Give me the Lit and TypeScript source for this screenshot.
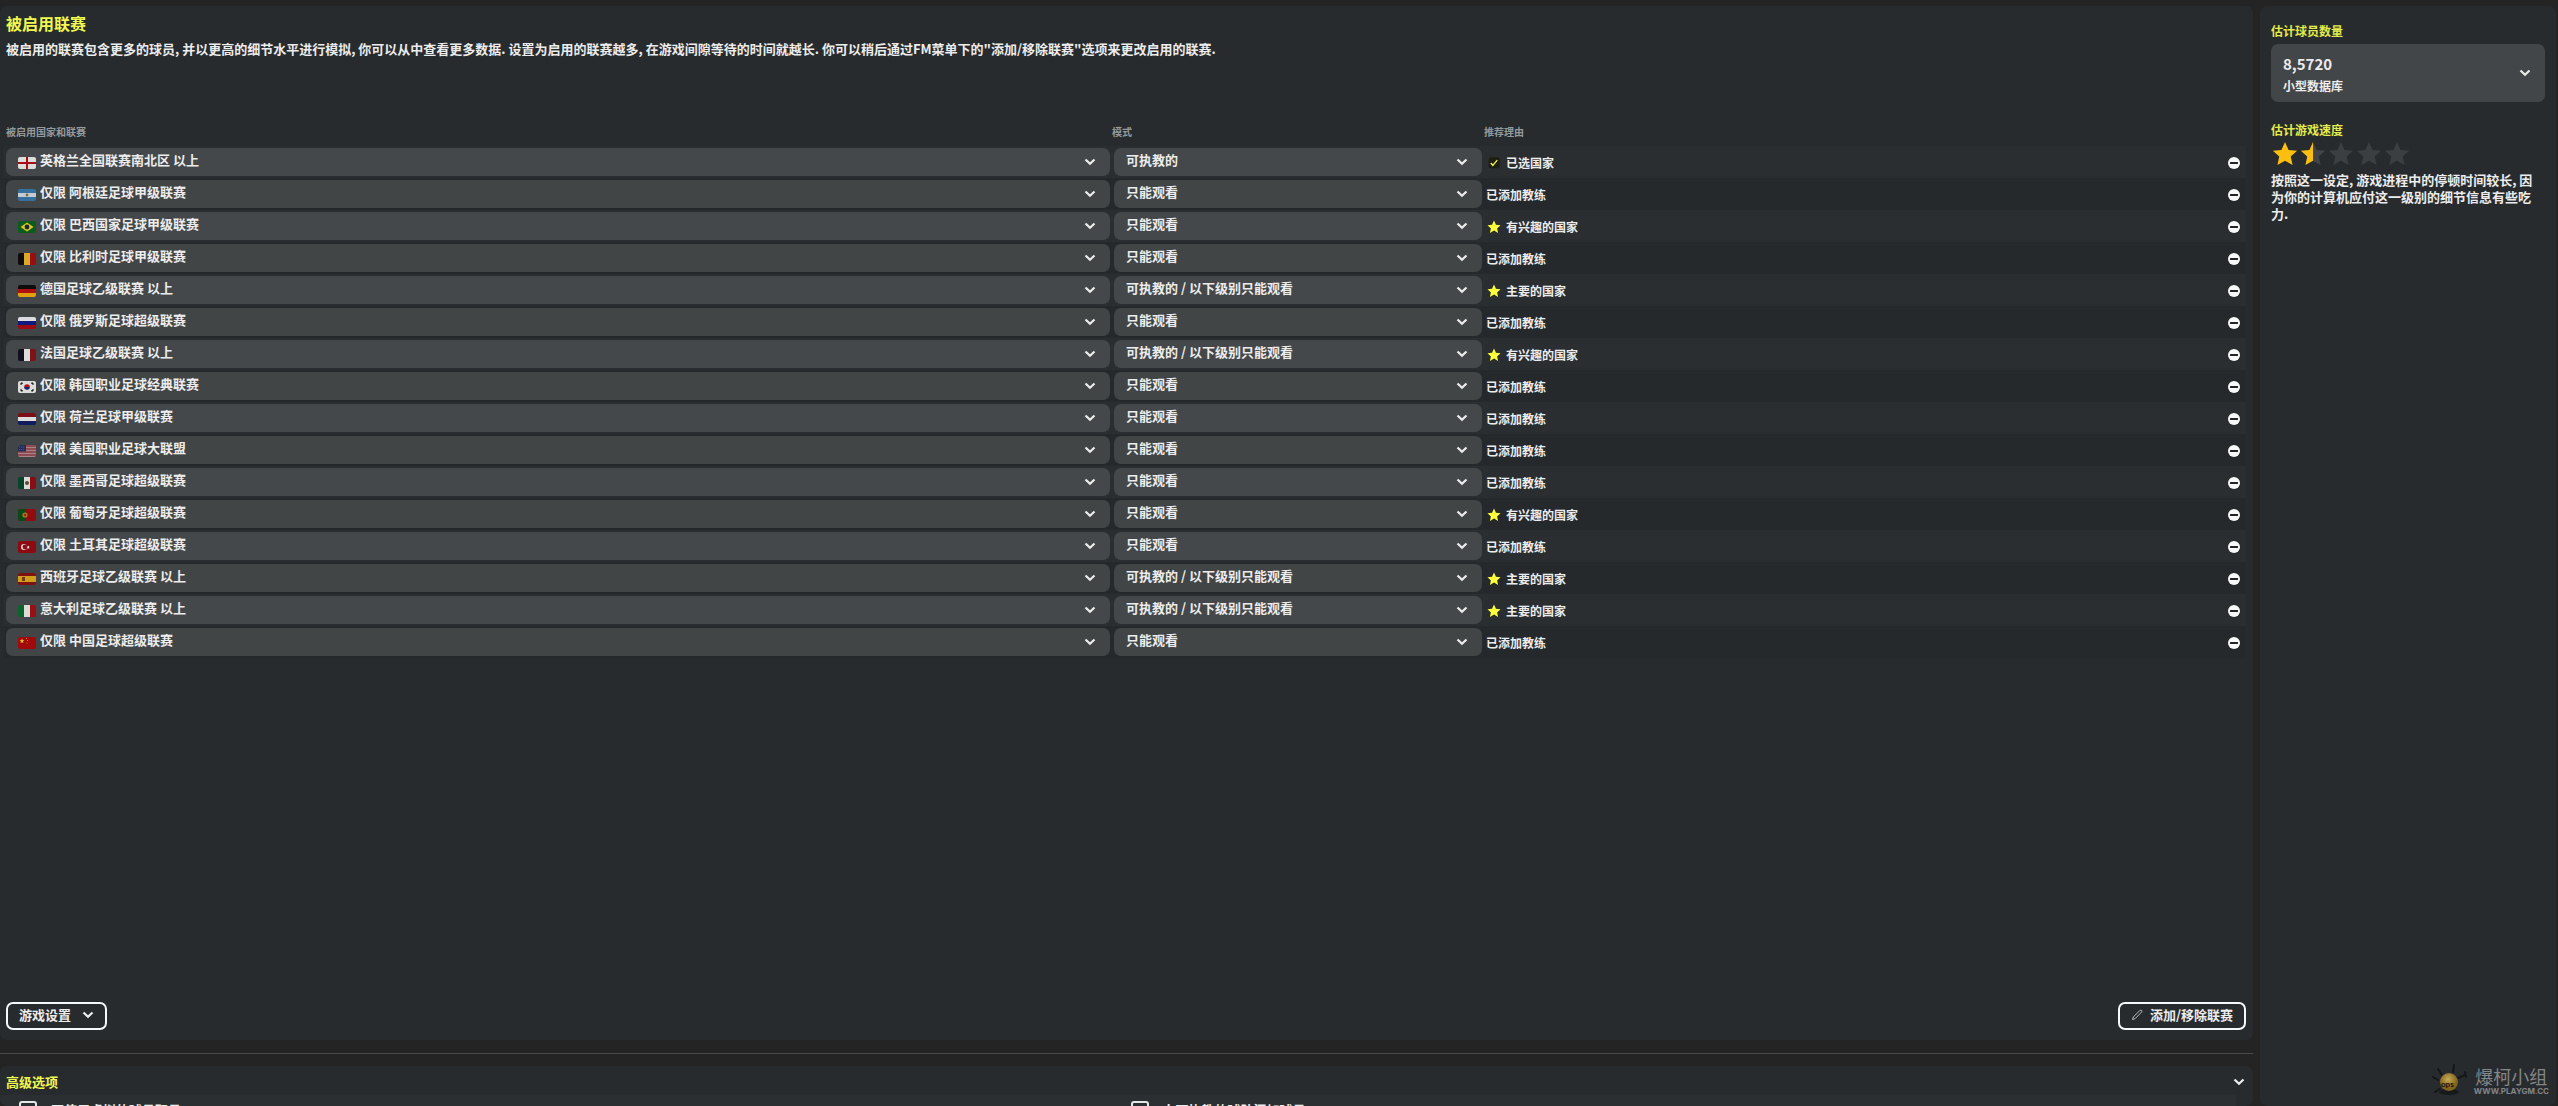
import { LitElement, html, svg, css, nothing } from "lit";
import { customElement, property } from "lit/decorators.js";

type Reason = "selected" | "coach" | "interest" | "major";

interface League {
  flag: string;
  name: string;
  mode: string;
  reason: Reason;
}

const VIEW = "只能观看";
const PLAY = "可执教的";
const MIXED = "可执教的 / 以下级别只能观看";

const REASONS: Record<Reason, string> = {
  selected: "已选国家",
  coach: "已添加教练",
  interest: "有兴趣的国家",
  major: "主要的国家",
};

const LEAGUES: League[] = [
  { flag: "eng", name: "英格兰全国联赛南北区 以上", mode: PLAY, reason: "selected" },
  { flag: "arg", name: "仅限 阿根廷足球甲级联赛", mode: VIEW, reason: "coach" },
  { flag: "bra", name: "仅限 巴西国家足球甲级联赛", mode: VIEW, reason: "interest" },
  { flag: "bel", name: "仅限 比利时足球甲级联赛", mode: VIEW, reason: "coach" },
  { flag: "ger", name: "德国足球乙级联赛 以上", mode: MIXED, reason: "major" },
  { flag: "rus", name: "仅限 俄罗斯足球超级联赛", mode: VIEW, reason: "coach" },
  { flag: "fra", name: "法国足球乙级联赛 以上", mode: MIXED, reason: "interest" },
  { flag: "kor", name: "仅限 韩国职业足球经典联赛", mode: VIEW, reason: "coach" },
  { flag: "ned", name: "仅限 荷兰足球甲级联赛", mode: VIEW, reason: "coach" },
  { flag: "usa", name: "仅限 美国职业足球大联盟", mode: VIEW, reason: "coach" },
  { flag: "mex", name: "仅限 墨西哥足球超级联赛", mode: VIEW, reason: "coach" },
  { flag: "por", name: "仅限 葡萄牙足球超级联赛", mode: VIEW, reason: "interest" },
  { flag: "tur", name: "仅限 土耳其足球超级联赛", mode: VIEW, reason: "coach" },
  { flag: "esp", name: "西班牙足球乙级联赛 以上", mode: MIXED, reason: "major" },
  { flag: "ita", name: "意大利足球乙级联赛 以上", mode: MIXED, reason: "major" },
  { flag: "chn", name: "仅限 中国足球超级联赛", mode: VIEW, reason: "coach" },
];

const rows = (a: string, b: string, c: string) => svg`
  <rect width="18" height="4" fill=${a}/><rect y="4" width="18" height="4" fill=${b}/><rect y="8" width="18" height="4" fill=${c}/>`;
const cols = (a: string, b: string, c: string) => svg`
  <rect width="6" height="12" fill=${a}/><rect x="6" width="6" height="12" fill=${b}/><rect x="12" width="6" height="12" fill=${c}/>`;

const FLAGS: Record<string, unknown> = {
  eng: svg`<rect width="18" height="12" fill="#dcdcda"/><path d="M9 0V12M0 6H18" stroke="#a80c14" stroke-width="2"/>`,
  arg: svg`${rows("#35709e", "#c2ccd2", "#35709e")}<circle cx="9" cy="6" r="1.4" fill="#7a6c4a"/>`,
  bra: svg`<rect width="18" height="12" fill="#0c5c1c"/><path d="M9 1.5L15.500 6L9 10.500L2.500 6Z" fill="#d8c81e"/><circle cx="9" cy="6" r="2.400" fill="#1d2340"/>`,
  bel: cols("#0d0d0d", "#dba92a", "#980f10"),
  ger: rows("#0d0d0d", "#b01010", "#e0a010"),
  rus: rows("#dcdce0", "#10187c", "#9c0c12"),
  fra: cols("#10121e", "#dcdcda", "#7e1216"),
  kor: svg`<rect width="18" height="12" fill="#dcdcda"/><path d="M6.200 6a2.800 2.800 0 0 1 5.600 0z" fill="#b01420"/><path d="M6.200 6a2.800 2.800 0 0 0 5.600 0z" fill="#182460"/><path d="M2.500 3.500L4.500 1.700M13.500 1.700L15.500 3.500M2.500 8.500L4.500 10.300M13.500 10.300L15.500 8.500" stroke="#222" stroke-width="1.600"/>`,
  ned: rows("#7c1016", "#dcdcda", "#101c5c"),
  usa: svg`<rect width="18" height="12" fill="#a8848a"/><path d="M0 1H18M0 4H18M0 7H18M0 10H18" stroke="#883840" stroke-width="1.300"/><rect width="8" height="6.500" fill="#262e58"/><path d="M1 2H7M1 4.500H7" stroke="#5a6088" stroke-width="0.800" stroke-dasharray="1 1"/>`,
  mex: svg`${cols("#07442a", "#dcdcd6", "#860e14")}<circle cx="9" cy="6" r="2" fill="#5a4a30"/>`,
  por: svg`<rect width="18" height="12" fill="#900c10"/><rect width="7" height="12" fill="#0b4a18"/><circle cx="7" cy="6" r="2.600" fill="#a08020"/><circle cx="7" cy="6" r="1.300" fill="#a82018"/>`,
  tur: svg`<rect width="18" height="12" fill="#8c0a10"/><circle cx="6" cy="6" r="3" fill="#e2dcdc"/><circle cx="7" cy="6" r="2.400" fill="#8c0a10"/><path d="M10.200 4.600l.5 1 1.100.2-.8.800.2 1.100-1-.5-1 .5.200-1.100-.8-.8 1.100-.2z" fill="#e2dcdc"/>`,
  esp: svg`<rect width="18" height="12" fill="#7e1210"/><rect y="3" width="18" height="6" fill="#d09e1c"/><rect x="4" y="4" width="3" height="4" fill="#7a3a18"/>`,
  ita: cols("#0c642c", "#dcdcd6", "#981014"),
  chn: svg`<rect width="18" height="12" fill="#a00a0a"/><path d="M4 1.500l.7 1.500 1.600.2-1.200 1.100.3 1.700L4 5.200 2.600 6l.3-1.700-1.200-1.100L3.300 3z" fill="#e8b820"/><path d="M8 1.500h1M9 3.500h1M8.500 6h1" stroke="#c08018"/>`,
};

const STAR = "M12 1l3.300 7.300 7.900.8-5.900 5.300 1.700 7.800L12 18.200 5 22.200l1.700-7.800L.8 9.100l7.900-.8z";

const chevron = html`<svg class="chevron" viewBox="0 0 12 8" aria-hidden="true">
  <path d="M1.500 1.500L6 5.800L10.500 1.500" fill="none" stroke="currentColor" stroke-width="2.200" />
</svg>`;

@customElement("fm-select")
class FmSelect extends LitElement {
  @property() value = "";
  @property() label = "";
  @property() flag = "";
  @property() caption = "";

  static styles = css`
    :host {
      display: grid;
      align-items: center;
      color: #ececec;
    }
    .control,
    .flag,
    .chevron,
    .caption {
      grid-area: 1 / 1;
    }
    .control {
      appearance: none;
      box-sizing: border-box;
      width: 100%;
      height: 28px;
      margin: 0;
      padding: 0 32px 4px 12px;
      border: 0;
      border-radius: 7px;
      background: var(--field, #434648);
      color: inherit;
      font: inherit;
      font-size: 13px;
      line-height: 20px;
    }
    .control option {
      background: #434648;
    }
    .flagged {
      padding-left: 34px;
    }
    .flag {
      width: 18px;
      height: 12px;
      margin: 2px 0 0 12px;
      border-radius: 2px;
      pointer-events: none;
    }
    .chevron {
      justify-self: end;
      width: 12px;
      height: 8px;
      margin-right: 14px;
      pointer-events: none;
    }
    .tall {
      height: 58px;
      padding: 0 40px 18px 12px;
      font-size: 15px;
    }
    .caption {
      align-self: end;
      padding: 0 0 6px 12px;
      font-size: 12px;
      line-height: 20px;
      pointer-events: none;
    }
  `;

  render() {
    const kind = this.caption ? "control tall" : this.flag ? "control flagged" : "control";
    return html`
      <select class=${kind} aria-label=${this.label}>
        <option>${this.value}</option>
      </select>
      ${this.flag
        ? html`<svg class="flag" viewBox="0 0 18 12" aria-hidden="true">${FLAGS[this.flag]}</svg>`
        : nothing}
      ${this.caption ? html`<span class="caption">${this.caption}</span>` : nothing} ${chevron}
    `;
  }
}

@customElement("app-root")
class AppRoot extends LitElement {
  static styles = css`
    :host {
      display: block;
      color: #ececec;
      font-family: "Noto Sans CJK SC", sans-serif;
      font-size: 13px;
      font-weight: 700;
    }
    .page {
      position: relative;
      box-sizing: border-box;
      display: grid;
      grid-template-columns: minmax(0, 1fr) 296px;
      gap: 7px;
      height: 100vh;
      padding: 6px 2px 0 0;
      overflow: hidden;
      background: #242424;
    }
    .main {
      display: flex;
      flex-direction: column;
      min-height: 0;
    }
    .panel {
      border-radius: 7px;
      background: #272b2e;
    }
    .leagues {
      flex: 1;
      display: flex;
      flex-direction: column;
      padding: 5px 7px 10px 4px;
    }
    .title {
      margin: 0;
      padding-left: 2px;
      color: #f0f850;
      font-size: 16px;
      font-weight: 700;
      line-height: 24px;
    }
    .intro {
      margin: 0;
      padding: 4px 2px 0;
      line-height: 20px;
    }
    .table {
      width: 100%;
      margin-top: 59px;
      border-collapse: collapse;
      table-layout: fixed;
    }
    .col-league {
      width: 49.42%;
    }
    .col-mode {
      width: 16.59%;
    }
    .head {
      height: 28px;
      padding: 0;
      color: #96999a;
      font-size: 10px;
      font-weight: 700;
      line-height: 16px;
      text-align: left;
    }
    .head:first-child {
      padding-left: 2px;
    }
    .row {
      --field: #424546;
      background: #26292c;
    }
    .row:nth-child(odd) {
      --field: #44484a;
      background: #2a2e30;
    }
    .cell {
      height: 32px;
      padding: 0 2px;
    }
    .reason {
      display: flex;
      align-items: center;
      gap: 5px;
      padding: 2px 4px 0 0;
      font-size: 12px;
      line-height: 20px;
    }
    .mark {
      width: 14px;
      height: 14px;
      margin-left: 1px;
    }
    .remove {
      display: grid;
      place-items: center;
      width: 12px;
      height: 12px;
      margin-left: auto;
      padding: 0;
      border: 0;
      border-radius: 50%;
      background: #f7f8f8;
    }
    .dash {
      width: 8px;
      height: 2px;
      background: #222628;
    }
    .actions {
      display: flex;
      justify-content: space-between;
      margin-top: auto;
      padding-left: 2px;
    }
    .button {
      display: flex;
      align-items: center;
      gap: 7px;
      box-sizing: border-box;
      height: 28px;
      padding: 0 11px 2px 11px;
      border: 2px solid #f7f8f8;
      border-radius: 7px;
      background: none;
      color: inherit;
      font: inherit;
      line-height: 20px;
    }
    .menu {
      gap: 11px;
    }
    .chevron {
      width: 12px;
      height: 8px;
    }
    .pencil {
      width: 12px;
      height: 12px;
    }
    .rule {
      width: 100%;
      height: 1px;
      margin: 13px 0 12px;
      border: 0;
      background: #4a4a49;
    }
    .advanced {
      flex: none;
      height: 40px;
      overflow: hidden;
    }
    .bar {
      display: flex;
      align-items: center;
      justify-content: space-between;
      padding: 2px 8px 0 4px;
      height: 27px;
    }
    .bar .title {
      font-size: 13px;
    }
    .toggle {
      padding: 0;
      border: 0;
      background: none;
      color: inherit;
      line-height: 0;
    }
    .options {
      display: grid;
      grid-template-columns: 1fr 1fr;
      gap: 6px;
      margin-right: 17px;
      padding: 5px 0 6px 19px;
      background: #2b2f32;
    }
    .option {
      display: flex;
      align-items: center;
      gap: 14px;
      line-height: 18px;
    }
    .box {
      appearance: none;
      box-sizing: border-box;
      width: 18px;
      height: 18px;
      margin: 1px 0 0;
      border: 2px solid #e6e8e8;
      border-radius: 3px;
    }
    .side {
      padding: 15px 11px 0;
    }
    .label {
      margin: 0;
      color: #e2ec4a;
      font-size: 12px;
      font-weight: 700;
      line-height: 20px;
    }
    .estimate {
      --field: #434648;
      margin: 3px 0 18px;
    }
    .rating {
      display: flex;
      gap: 2px;
      margin-top: 1px;
      padding-left: 1px;
    }
    .star {
      width: 26px;
      height: 26px;
    }
    .note {
      margin: 4px 0 0;
      padding-right: 12px;
      line-height: 17px;
    }
    .brand {
      position: absolute;
      right: 9px;
      bottom: 8px;
      display: flex;
      align-items: center;
      gap: 4px;
      color: #8e9193;
      opacity: 0.9;
    }
    .brand-icon {
      width: 38px;
      height: 34px;
    }
    .brand-text {
      display: grid;
      justify-items: center;
    }
    .brand-name {
      font-size: 18px;
      font-weight: 400;
      line-height: 20px;
    }
    .brand-site {
      font-family: Inter, sans-serif;
      font-size: 8px;
      font-weight: 700;
      line-height: 10px;
    }
  `;

  private mark(reason: Reason) {
    if (reason === "coach") return nothing;
    return html`<svg class="mark" viewBox="0 0 24 24" aria-hidden="true">
      ${reason === "selected"
        ? svg`<rect x="3" y="2" width="19" height="19" rx="3" fill="#1d1f12"/><path d="M6.500 12l3.500 4 7.500-9" fill="none" stroke="#eef05a" stroke-width="2.400"/>`
        : svg`<path d=${STAR} fill="#ffff3c"/>`}
    </svg>`;
  }

  private star(fill: number) {
    return html`<svg class="star" viewBox="0 0 24 24" aria-hidden="true">
      <defs>
        <linearGradient id="half">
          <stop offset="50%" stop-color="#fdbf0f" />
          <stop offset="50%" stop-color="#414548" />
        </linearGradient>
      </defs>
      <path d=${STAR} fill=${fill >= 1 ? "#fdbf0f" : fill > 0 ? "url(#half)" : "#3b3f42"} />
    </svg>`;
  }

  private row(league: League) {
    return html`<tr class="row">
      <td class="cell">
        <fm-select .value=${league.name} .label=${"联赛"} .flag=${league.flag}></fm-select>
      </td>
      <td class="cell"><fm-select .value=${league.mode} .label=${"模式"}></fm-select></td>
      <td class="cell">
        <div class="reason">
          ${this.mark(league.reason)}
          <span>${REASONS[league.reason]}</span>
          <button class="remove" aria-label="移除"><span class="dash"></span></button>
        </div>
      </td>
    </tr>`;
  }

  render() {
    return html`<div class="page">
      <main class="main">
        <section class="panel leagues">
          <h1 class="title">被启用联赛</h1>
          <p class="intro">
            被启用的联赛包含更多的球员, 并以更高的细节水平进行模拟, 你可以从中查看更多数据. 设置为启用的联赛越多, 在游戏间隙等待的时间就越长. 你可以稍后通过FM菜单下的"添加/移除联赛"选项来更改启用的联赛.
          </p>
          <table class="table">
            <colgroup>
              <col class="col-league" />
              <col class="col-mode" />
              <col />
            </colgroup>
            <thead>
              <tr>
                <th class="head">被启用国家和联赛</th>
                <th class="head">模式</th>
                <th class="head">推荐理由</th>
              </tr>
            </thead>
            <tbody>
              ${LEAGUES.map((league) => this.row(league))}
            </tbody>
          </table>
          <div class="actions">
            <button class="button menu">游戏设置 ${chevron}</button>
            <button class="button">
              <svg class="pencil" viewBox="0 0 12 12" aria-hidden="true">
                <path d="M1.500 10.500L2.300 8L8.800 1.500Q10 .8 10.700 1.500T10.500 3.200L4 9.700Z" fill="none" stroke="#b9bbbc" />
              </svg>
              添加/移除联赛
            </button>
          </div>
        </section>
        <hr class="rule" />
        <section class="panel advanced">
          <div class="bar">
            <h2 class="title">高级选项</h2>
            <button class="toggle" aria-label="展开">${chevron}</button>
          </div>
          <div class="options">
            <label class="option"><input class="box" type="checkbox" />不使用虚拟的球员职员</label>
            <label class="option"><input class="box" type="checkbox" />向可执教的球队添加球员</label>
          </div>
        </section>
      </main>
      <aside class="panel side">
        <h2 class="label">估计球员数量</h2>
        <fm-select class="estimate" .value=${"8,5720"} .label=${"数据库"} .caption=${"小型数据库"}></fm-select>
        <h2 class="label">估计游戏速度</h2>
        <div class="rating">${[1, 0.5, 0, 0, 0].map((fill) => this.star(fill))}</div>
        <p class="note">按照这一设定, 游戏进程中的停顿时间较长, 因为你的计算机应付这一级别的细节信息有些吃力.</p>
      </aside>
      <div class="brand">
        <svg class="brand-icon" viewBox="0 0 38 34" aria-hidden="true">
          <defs>
            <radialGradient id="ball" cx="45%" cy="35%">
              <stop offset="0" stop-color="#d8b95a" />
              <stop offset="1" stop-color="#8a6a1c" />
            </radialGradient>
          </defs>
          <ellipse cx="17" cy="28" rx="10" ry="3" fill="#16181a" />
          <path d="M10 11L6 5M21 8l1-7M6 16l-5-3M26 14l7-3M33 8l1 5M8 25l-5 3" stroke="#131517" stroke-width="2" stroke-linecap="round" />
          <circle cx="17" cy="18" r="9" fill="url(#ball)" />
          <text x="9" y="23" font-family="Lato, sans-serif" font-size="8" font-weight="900" fill="#17140a">ops</text>
        </svg>
        <div class="brand-text">
          <span class="brand-name">爆柯小组</span>
          <span class="brand-site">WWW.PLAYGM.CC</span>
        </div>
      </div>
    </div>`;
  }
}
